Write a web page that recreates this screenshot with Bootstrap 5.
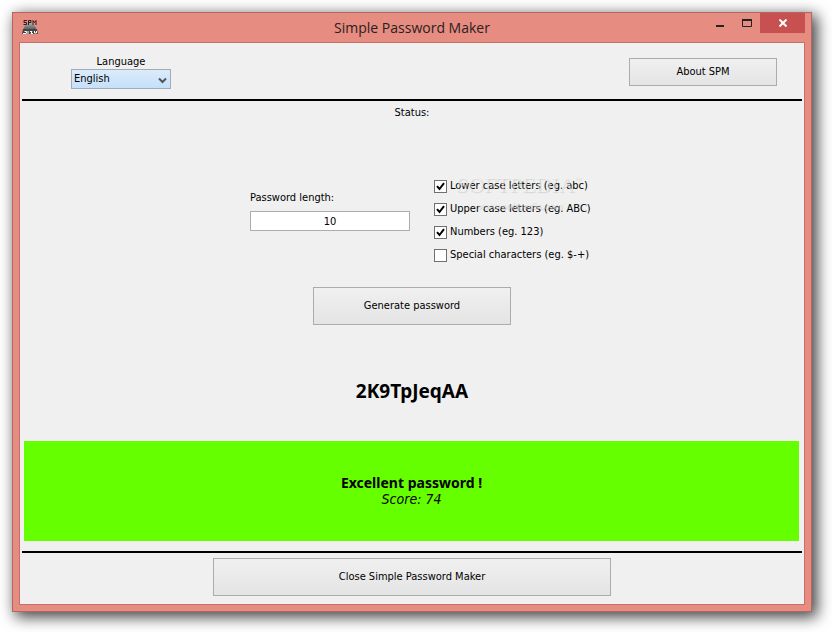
<!DOCTYPE html>
<html lang="en">
<head>
<meta charset="utf-8">
<meta name="viewport" content="width=device-width, initial-scale=1">
<title>Simple Password Maker</title>
<link href="https://cdn.jsdelivr.net/npm/bootstrap@5.3.0/dist/css/bootstrap.min.css" rel="stylesheet">
<style>
  body { font: 11px/14px "DejaVu Sans Condensed", "DejaVu Sans", sans-serif; color: #000; background: #fff; padding: 12px 20px 20px 12px; }
  .app-window { background: #e68c80; border: 1px solid #b5655f; padding: 0 6px 6px; box-shadow: 4px 4px 14px 1px rgba(0,0,0,.75); }
  .title-bar { height: 29px; }
  .app-icon { margin: 6px 0 0 3px; }
  .title-text { font: 14px/20px "Open Sans", sans-serif; color: #2b2020; padding-left: 80px; }
  .win-btn { width: 27px; height: 20px; border: 0; padding: 0; background: transparent; display: flex; align-items: center; justify-content: center; }
  .win-close { width: 45px; background: #c75050; }
  .client { background: #f0f0f0; border: 1px solid #c4716a; padding: 0 2px; }
  .rule { height: 2px; background: #000; border: 0; opacity: 1; margin: 0; }
  .top-area { height: 56px; padding: 12px 25px 0 49px; }
  .lang { width: 100px; }
  .lang-select { height: 20px; border: 1px solid #a5abb5; border-radius: 0; padding: 0 18px 0 2px; font: inherit; line-height: 18px; color: #000; width: 100%; appearance: none; background: linear-gradient(#dcebfa, #c4e0fc); }
  .chev { right: 4px; top: 8px; }
  .btn-win { font: inherit; color: #000; border: 1px solid #acacac; border-radius: 0; background: linear-gradient(#f0f0f0, #e4e4e4); padding: 0; }
  .btn-about { width: 148px; height: 28px; margin-top: 3px; }
  .btn-gen { width: 198px; height: 38px; }
  .btn-quit { width: 398px; height: 38px; }
  .status-line { margin: 5px 0 0; }
  .options { gap: 24px; padding: 59px 0 25px; }
  .len-box { width: 160px; padding-top: 12px; }
  .len-input { width: 100%; height: 20px; border: 1px solid #abadb3; padding: 0; text-align: center; font: inherit; background: #fff; margin-top: 6px; }
  .checks { gap: 9px; width: 140px; }
  .checks label { gap: 3px; white-space: nowrap; }
  .tick { appearance: none; width: 13px; height: 13px; margin: 0; border: 1px solid #707070; background: #fff; flex: none; }
  .tick:checked { background: #fff url("data:image/svg+xml,%3Csvg xmlns='http://www.w3.org/2000/svg' viewBox='0 0 11 11'%3E%3Cpath d='M2 5.2 4.5 8 9 2.2' fill='none' stroke='%23000' stroke-width='2'/%3E%3C/svg%3E"); }
  .watermark { left: 22px; top: -8px; font-family: "Liberation Serif", serif; color: rgba(245,245,245,.5); text-shadow: 1px 1px 1px rgba(0,0,0,.12); white-space: nowrap; }
  .watermark b { font-size: 22px; line-height: 28px; font-weight: 400; }
  .watermark sup { font-size: 7px; top: -10px; }
  .watermark small { font: 700 9px/14px "Liberation Sans", sans-serif; padding-left: 22px; }
  .secret { font-size: 19px; line-height: 24px; font-weight: 700; font-family: "Noto Sans", sans-serif; padding-top: 15px; }
  .rating { height: 100px; background: #66ff00; margin: 0 3px 10px 2px; font-size: 14px; line-height: 17px; }
  .rating strong { font-family: "Noto Sans", sans-serif; }
  .bottom-area { padding: 5px 0 8px; }
</style>
</head>
<body class="min-vh-100 d-flex">
<main class="app-window flex-grow-1 d-flex flex-column">
  <header class="title-bar d-flex align-items-start">
    <svg class="app-icon" width="16" height="16" viewBox="0 0 16 16" aria-hidden="true">
      <defs><linearGradient id="metal" x2="0" y2="1"><stop stop-color="#aaa"/><stop offset="1" stop-color="#555"/></linearGradient></defs>
      <path d="M4 4h7l4 7H1z" fill="url(#metal)"/>
      <path d="M5 1.500H2v2h2.500v2H1.500M6.500 6V1.500h2.500v2H6.500M11 6V1.500l1.500 2 1.500-2V6" fill="none" stroke="#2b1d1d"/>
      <path d="M1 10h14l1 5H0z" fill="#444"/>
      <path d="M1 14.500h3M2.500 12.500h2v2M6 12v3M8 12.500h2l-1 2h2M12.500 12v2h2v-2" fill="none" stroke="#fff"/>
    </svg>
    <h1 class="title-text m-0 flex-grow-1 text-center align-self-center">Simple Password Maker</h1>
    <div class="d-flex">
      <button class="win-btn" aria-label="Minimize"><svg width="10" height="10"><path d="M1 8h8" stroke="#222" stroke-width="2"/></svg></button>
      <button class="win-btn" aria-label="Maximize"><svg width="10" height="8"><path d="M.5 1v6.500h9V1" fill="none" stroke="#222"/><path d="M0 1h10" stroke="#222" stroke-width="2"/></svg></button>
      <button class="win-btn win-close" aria-label="Close"><svg width="8" height="8"><path d="m.5.5 7 7m0-7-7 7" stroke="#fff" stroke-width="2"/></svg></button>
    </div>
  </header>
  <div class="client flex-grow-1 d-flex flex-column">
    <div class="top-area d-flex justify-content-between align-items-start">
      <div class="lang text-center">
        <label class="d-block" for="language">Language</label>
        <div class="position-relative">
          <select class="lang-select d-block" id="language"><option>English</option></select>
          <svg class="chev position-absolute pe-none" width="9" height="8"><path d="m1 1.500 3.500 3.500L8 1.500" fill="none" stroke="#555" stroke-width="2"/></svg>
        </div>
      </div>
      <button class="btn-win btn-about">About SPM</button>
    </div>
    <hr class="rule">
    <p class="status-line text-center">Status:</p>
    <div class="options d-flex justify-content-center">
      <div class="len-box">
        <label class="d-block" for="len">Password length:</label>
        <input class="len-input" id="len" type="text" value="10">
      </div>
      <div class="checks d-flex flex-column position-relative">
        <label class="d-flex align-items-center"><input class="tick" type="checkbox" checked>Lower case letters (eg. abc)</label>
        <label class="d-flex align-items-center"><input class="tick" type="checkbox" checked>Upper case letters (eg. ABC)</label>
        <label class="d-flex align-items-center"><input class="tick" type="checkbox" checked>Numbers (eg. 123)</label>
        <label class="d-flex align-items-center"><input class="tick" type="checkbox">Special characters (eg. $-+)</label>
        <div class="watermark position-absolute pe-none d-flex flex-column" aria-hidden="true"><span><b>SOFTPEDIA</b><sup>™</sup></span><small>www.softpedia.com</small></div>
      </div>
    </div>
    <div class="text-center"><button class="btn-win btn-gen">Generate password</button></div>
    <output class="secret d-flex flex-grow-1 align-items-center justify-content-center">2K9TpJeqAA</output>
    <section class="rating d-flex flex-column justify-content-center text-center">
      <strong>Excellent password !</strong>
      <em>Score: 74</em>
    </section>
    <hr class="rule">
    <div class="bottom-area text-center"><button class="btn-win btn-quit">Close Simple Password Maker</button></div>
  </div>
</main>
<script src="https://cdn.jsdelivr.net/npm/bootstrap@5.3.0/dist/js/bootstrap.bundle.min.js"></script>
</body>
</html>
